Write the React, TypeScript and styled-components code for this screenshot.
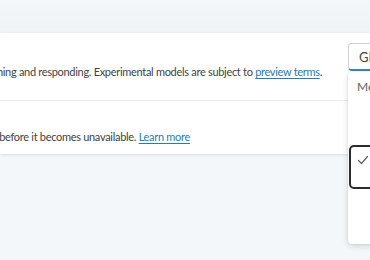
import styled, { createGlobalStyle } from 'styled-components'

const GlobalStyle = createGlobalStyle`
  html, body {
    margin: 0;
    padding: 0;
  }
  body {
    background: #f3f7fa;
    font-family: Lato, "Noto Sans", sans-serif;
    color: #424242;
  }
`

const Page = styled.div`
  position: relative;
  width: 370px;
  height: 260px;
  overflow: hidden;
  display: flex;
  flex-direction: column;
`

const TopBand = styled.div`
  height: 33px;
  flex: none;
  background: linear-gradient(180deg, #f4f7f9 0%, #eef3f6 100%);
`

const Card = styled.section`
  background: #fff;
  box-shadow: 0 1px 3px rgba(0, 0, 0, 0.1);
  display: flex;
  flex-direction: column;
`

// text is wider than the window; it is right-aligned so its head runs off the left edge
const Row = styled.div<{ $top: number; $bottom: number; $end: number }>`
  display: flex;
  justify-content: flex-end;
  padding: ${p => p.$top}px ${p => 370 - p.$end}px ${p => p.$bottom}px 0;
  & + & {
    border-top: 1px solid #ececec;
  }
`

const Text = styled.p`
  flex: none;
  margin: 0;
  white-space: nowrap;
  font-size: 11px;
  letter-spacing: -0.3px;
  line-height: 16px;
`

const Link = styled.a`
  color: #2a7ab3;
  text-decoration: underline;
  text-underline-offset: 2px;
`

const Combo = styled.div`
  position: absolute;
  left: 348px;
  top: 43px;
  width: 60px;
  height: 25px;
  background: #fff;
  border: 1px solid #d1d1d1;
  border-bottom: 2px solid #3d86b0;
  border-radius: 4px 0 0 4px;
  box-sizing: content-box;
  display: flex;
  align-items: center;
  padding-left: 10px;
  font-size: 13px;
  color: #424242;
`

const Popup = styled.div`
  position: absolute;
  left: 348px;
  top: 72px;
  width: 60px;
  height: 172px;
  background: #fff;
  border-radius: 4px;
  box-shadow: 0 2px 6px rgba(0, 0, 0, 0.14), 0 0 2px rgba(0, 0, 0, 0.12);
  display: flex;
  flex-direction: column;
  padding-top: 7px;
  box-sizing: border-box;
`

const GroupLabel = styled.div`
  padding-left: 9px;
  font-size: 12px;
  line-height: 16px;
  color: #616161;
`

const Option = styled.div<{ $selected?: boolean; $gap?: number }>`
  margin: ${p => p.$gap ?? 0}px 0 0 1px;
  height: 44px;
  box-sizing: border-box;
  border: 2px solid ${p => (p.$selected ? '#2b2b2b' : 'transparent')};
  border-radius: 5px;
  padding: 3px 0 0 6px;
`

export default function App() {
  return (
    <>
      <GlobalStyle />
      <Page>
        <TopBand />
        <Card>
          <Row $top={31} $bottom={20} $end={322}>
            <Text>
              Gemini 2.5 Pro is our most advanced thinking model, capable of reasoning and responding. Experimental models are subject to{' '}
              <Link href="#">preview terms</Link>.
            </Text>
          </Row>
          <Row $top={28} $bottom={9} $end={190}>
            <Text>
              This model will be retired soon. Please migrate to a newer model before it becomes unavailable.{' '}
              <Link href="#">Learn more</Link>
            </Text>
          </Row>
        </Card>
        <Combo>GPT-4o</Combo>
        <Popup>
          <GroupLabel>Models</GroupLabel>
          <Option $gap={6} />
          <Option $selected>
            <svg width="12" height="12" viewBox="0 0 12 12" fill="none">
              <path d="M1.5 6.5 L4.5 9.5 L10.5 2.5" stroke="#616161" strokeWidth="1.2" strokeLinecap="round" strokeLinejoin="round" />
            </svg>
          </Option>
        </Popup>
      </Page>
    </>
  )
}
